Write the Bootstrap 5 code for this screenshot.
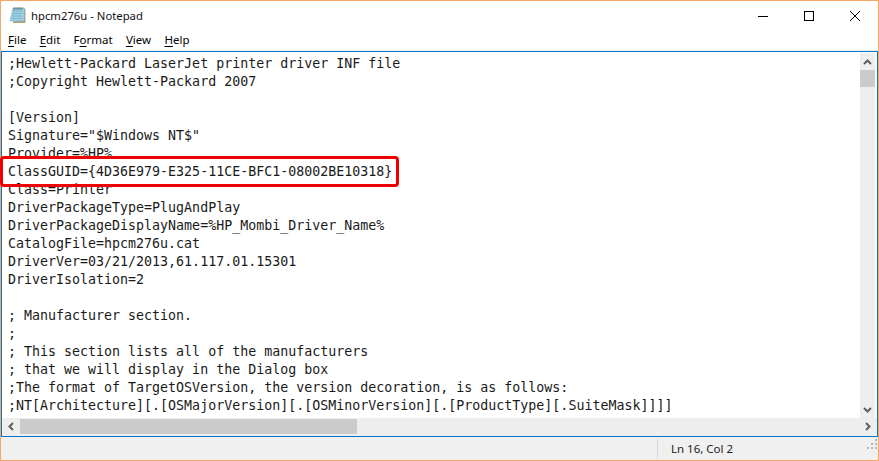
<!DOCTYPE html>
<html lang="en"><head><meta charset="utf-8"><title>hpcm276u - Notepad</title>
<link href="https://cdn.jsdelivr.net/npm/bootstrap@5.3.0/dist/css/bootstrap.min.css" rel="stylesheet">
<style>
html,body{margin:0;height:461px;overflow:hidden;background:#fff}
.win{width:879px;height:461px;border:1px solid #f6a766;background:#fff;font-family:"Noto Sans","Open Sans",sans-serif;color:#000}
.ttl{height:30px;padding-left:8px}
.ttl svg.ico{margin-bottom:2px}
.ttl-name{margin-left:5px;font-size:11.3px;color:#111}
.wbtn{width:46px;height:29px}
.mnu{height:20px;padding-left:7px;gap:13.3px;font-size:11.5px;line-height:17px;border-bottom:1px solid #f0f0f0}
.mnu u{text-underline-offset:2px}
.edit{height:386px;border:1px solid #0a74c8}
.body-row{height:366px}
.txt{font-family:"DejaVu Sans Mono","Liberation Mono",monospace;font-size:13.3px;line-height:18px;padding:3px 0 0 6px;white-space:pre;margin:0;overflow:hidden;color:#1a1a1a;background:#fff}
.vbar{width:17px;background:#fff;padding:1px 2px 0 0}
.vin{background:#eee;width:15px;height:100%}
.arr{height:17px}
.vth{height:17px;background:#cbcbcb}
.hbar{height:18px;background:#eee;padding:1px 0 2px}
.harr{width:18px}
.hth{width:337px;background:#cbcbcb}
.stat{background:#f0f0f0;font-size:11.5px}
.stat-ln{margin-left:auto;width:221px;border-left:1px solid #d7d7d7;padding-left:13px;color:#222;height:20px;margin-top:2px;line-height:20px}
.grip{margin-left:auto}
.hilite{position:absolute;left:-1px;top:155px;width:399px;height:31px;border:3px solid #f00000;border-radius:4px}
</style></head><body>
<div class="win d-flex flex-column position-relative">
 <div class="ttl d-flex align-items-center">
  <svg class="ico" width="17" height="16" viewBox="0 0 17 16"><path d="M5 2h11.500v14H4z" fill="#b0a27e"/><path d="M4 1h11.500l-.5 13H1z" fill="#9fd0e4" stroke="#7fb0c8" stroke-width=".6"/><path d="M4 4h9M3.500 6.500h9.500M3 9h10M2.500 11.500h10.500" stroke="#6fa9c4" stroke-width=".8"/><path d="M5 .5v2M7 .5v2M9 .5v2M11 .5v2M13 .5v2" stroke="#4a5a62"/></svg>
  <span class="ttl-name">hpcm276u - Notepad</span>
  <div class="d-flex ms-auto">
   <div class="wbtn d-flex align-items-center justify-content-center"><svg width="10" height="10"><path d="M0 5.500h10" stroke="#000"/></svg></div>
   <div class="wbtn d-flex align-items-center justify-content-center"><svg width="10" height="10"><rect x=".5" y=".5" width="9" height="9" fill="none" stroke="#000"/></svg></div>
   <div class="wbtn d-flex align-items-center justify-content-center"><svg width="10" height="10"><path d="M0 0l10 10M10 0L0 10" stroke="#000"/></svg></div>
  </div>
 </div>
 <div class="mnu d-flex"><span><u>F</u>ile</span><span><u>E</u>dit</span><span>F<u>o</u>rmat</span><span><u>V</u>iew</span><span><u>H</u>elp</span></div>
 <div class="edit d-flex flex-column">
  <div class="body-row d-flex">
   <pre class="txt flex-grow-1">;Hewlett-Packard LaserJet printer driver INF file
;Copyright Hewlett-Packard 2007

[Version]
Signature="$Windows NT$"
Provider=%HP%
ClassGUID={4D36E979-E325-11CE-BFC1-08002BE10318}
Class=Printer
DriverPackageType=PlugAndPlay
DriverPackageDisplayName=%HP_Mombi_Driver_Name%
CatalogFile=hpcm276u.cat
DriverVer=03/21/2013,61.117.01.15301
DriverIsolation=2

; Manufacturer section.
;
; This section lists all of the manufacturers
; that we will display in the Dialog box
;The format of TargetOSVersion, the version decoration, is as follows:
;NT[Architecture][.[OSMajorVersion][.[OSMinorVersion][.[ProductType][.SuiteMask]]]]</pre>
   <div class="vbar"><div class="vin d-flex flex-column">
    <div class="arr d-flex align-items-center justify-content-center"><svg width="9" height="6"><path d="M1 5l3.500-3.500L8 5" fill="none" stroke="#606060" stroke-width="2"/></svg></div>
    <div class="vth"></div>
    <div class="flex-grow-1"></div>
    <div class="arr d-flex align-items-center justify-content-center"><svg width="9" height="6"><path d="M1 1l3.500 3.500L8 1" fill="none" stroke="#606060" stroke-width="2"/></svg></div>
   </div></div>
  </div>
  <div class="hbar d-flex">
   <div class="harr d-flex align-items-center justify-content-center"><svg width="6" height="9"><path d="M5 1L1.500 4.500 5 8" fill="none" stroke="#606060" stroke-width="2"/></svg></div>
   <div class="hth"></div>
   <div class="flex-grow-1"></div>
   <div class="harr d-flex align-items-center justify-content-center"><svg width="6" height="9"><path d="M1 1l3.500 3.500L1 8" fill="none" stroke="#606060" stroke-width="2"/></svg></div>
  </div>
 </div>
 <div class="stat d-flex flex-grow-1"><div class="stat-ln d-flex"><span>Ln 16, Col 2</span>
  <svg class="grip" width="11" height="11" viewBox="0 0 11 11" fill="#b8b8b8"><rect x="8" y="0" width="2" height="2"/><rect x="4" y="4" width="2" height="2"/><rect x="8" y="4" width="2" height="2"/><rect x="0" y="8" width="2" height="2"/><rect x="4" y="8" width="2" height="2"/><rect x="8" y="8" width="2" height="2"/></svg></div></div>
 <div class="hilite"></div>
</div>
</body></html>
